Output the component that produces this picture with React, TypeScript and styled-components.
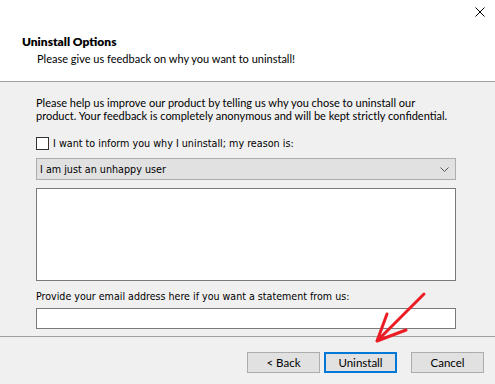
import styled, { createGlobalStyle } from "styled-components";

const GlobalStyle = createGlobalStyle`
  html, body {
    margin: 0;
    padding: 0;
    background: #f0f0f0;
  }
  * {
    box-sizing: border-box;
  }
`;

const segoe = `Lato, "DejaVu Sans Condensed", sans-serif`;
const tahoma = `"DejaVu Sans Condensed", "DejaVu Sans", sans-serif`;

const Window = styled.div`
  position: relative;
  width: 495px;
  height: 384px;
  display: flex;
  flex-direction: column;
  background: #f0f0f0;
  color: #000;
  overflow: hidden;
`;

const Header = styled.div`
  position: relative;
  height: 82px;
  background: #fff;
  border-bottom: 1px solid #a0a0a0;
  padding: 34px 0 0 22px;
  font-family: ${segoe};
`;

const Title = styled.div`
  font-size: 12px;
  font-weight: 800;
  line-height: 16px;
`;

const Subtitle = styled.div`
  padding-left: 15px;
  font-size: 11px;
  line-height: 17px;
`;

const CloseButton = styled.div`
  position: absolute;
  top: 7px;
  right: 10px;
  width: 10px;
  height: 10px;
  display: flex;
`;

const Body = styled.div`
  flex: 1;
  padding: 14px 39px 0 36px;
  display: flex;
  flex-direction: column;
`;

const Intro = styled.p`
  margin: 0;
  font-family: ${segoe};
  font-size: 11px;
  line-height: 13px;
  white-space: nowrap;
`;

const CheckRow = styled.label`
  margin-top: 15px;
  display: flex;
  align-items: center;
  gap: 4px;
  height: 13px;
  font-family: ${tahoma};
  font-size: 10.7px;
  white-space: nowrap;
`;

const Box = styled.span`
  width: 13px;
  height: 13px;
  border: 1px solid #333;
  background: #fff;
`;

const Combo = styled.div`
  margin-top: 8px;
  height: 22px;
  border: 1px solid #adadad;
  background: #e1e1e1;
  display: flex;
  align-items: center;
  justify-content: space-between;
  padding: 0 6px 0 3px;
  font-family: ${tahoma};
  font-size: 10.7px;
`;

const Memo = styled.div`
  margin-top: 8px;
  height: 93px;
  border: 1px solid #7a7a7a;
  background: #fff;
`;

const FieldLabel = styled.div`
  margin-top: 9px;
  font-family: ${tahoma};
  font-size: 10.6px;
  line-height: 13px;
  white-space: nowrap;
`;

const EmailBox = styled.div`
  margin-top: 5px;
  height: 21px;
  border: 1px solid #7a7a7a;
  background: #fff;
`;

const Footer = styled.div`
  height: 48px;
  border-top: 1px solid #a0a0a0;
  display: flex;
  justify-content: flex-end;
  align-items: flex-start;
  padding: 15px 11px 0 0;
`;

const Button = styled.div<{ $primary?: boolean; $gap?: number }>`
  width: 73px;
  height: 21px;
  margin-left: ${(p) => p.$gap ?? 0}px;
  display: flex;
  align-items: center;
  justify-content: center;
  background: #e1e1e1;
  border: ${(p) => (p.$primary ? "2px solid #0078d7" : "1px solid #adadad")};
  font-family: ${segoe};
  font-size: 11.5px;
`;

const Arrow = styled.svg`
  position: absolute;
  left: 370px;
  top: 288px;
`;

export default function App() {
  return (
    <Window>
      <GlobalStyle />
      <Header>
        <Title>Uninstall Options</Title>
        <Subtitle>Please give us feedback on why you want to uninstall!</Subtitle>
        <CloseButton>
          <svg width="10" height="10" viewBox="0 0 10 10">
            <path d="M0.5 0.5 L9.5 9.5 M9.5 0.5 L0.5 9.5" stroke="#000" strokeWidth="1" />
          </svg>
        </CloseButton>
      </Header>
      <Body>
        <Intro>
          Please help us improve our product by telling us why you chose to uninstall our
          <br />
          product. Your feedback is completely anonymous and will be kept strictly confidential.
        </Intro>
        <CheckRow>
          <Box />
          I want to inform you why I uninstall; my reason is:
        </CheckRow>
        <Combo>
          <span>I am just an unhappy user</span>
          <svg width="9" height="5" viewBox="0 0 9 5">
            <path d="M0.5 0.5 L4.5 4.5 L8.5 0.5" fill="none" stroke="#555" strokeWidth="1" />
          </svg>
        </Combo>
        <Memo />
        <FieldLabel>Provide your email address here if you want a statement from us:</FieldLabel>
        <EmailBox />
      </Body>
      <Footer>
        <Button>&lt; Back</Button>
        <Button $primary $gap={4}>Uninstall</Button>
        <Button $gap={14}>Cancel</Button>
      </Footer>
      <Arrow width="60" height="60" viewBox="0 0 60 60">
        <path
          d="M54 6 L7 53 M7 53 L17 26 M7 53 L36 42"
          fill="none"
          stroke="#ec1c24"
          strokeWidth="3"
          strokeLinecap="round"
          strokeLinejoin="round"
        />
      </Arrow>
    </Window>
  );
}
